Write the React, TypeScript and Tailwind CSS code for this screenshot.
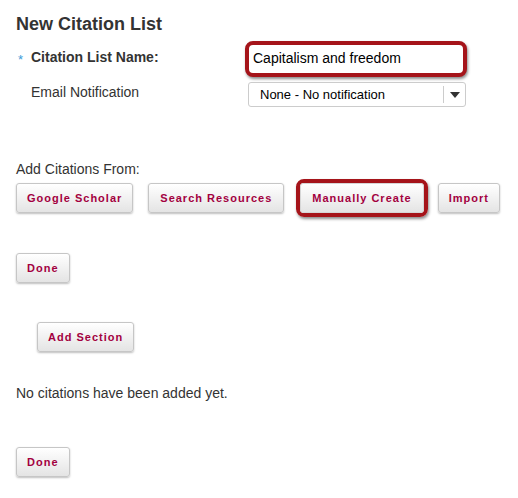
import React from 'react';

const btn =
  'h-[30px] px-[10px] rounded-[3px] border border-[#c6c6c6] bg-gradient-to-b from-white to-[#e4e4e4] shadow-[0_1px_2px_rgba(0,0,0,0.25)] text-[11px] font-bold tracking-[1px] text-[#a3003f] leading-none whitespace-nowrap';

function Btn({ label, wide }: { label: string; wide?: boolean }) {
  return <button className={btn + (wide ? ' px-[11px]' : '')}>{label}</button>;
}

export default function App() {
  return (
    <div className="min-h-[498px] bg-white pl-4 pt-[13px] font-['Liberation_Sans',Arial,sans-serif] text-[#333]">
      <h1 className="text-[18px] font-bold leading-[22px]">New Citation List</h1>

      <div className="mt-[6px] flex h-[36px]">
        <div className="flex w-[229px] items-start pt-[8px]">
          <span className="w-[15px] pl-[2px] pt-[3px] text-[13px] leading-[16px] text-[#3a9bd8]">*</span>
          <span className="text-[14px] font-bold leading-[16px]">Citation List Name:</span>
        </div>
        <div className="w-[222px] rounded-[8px] border-4 border-[#a5141a] bg-white shadow-[1px_2px_3px_rgba(0,0,0,0.45)]">
          <div className="pl-[4px] pt-[5px] text-[14px] leading-[16px] text-black">Capitalism and freedom</div>
        </div>
      </div>

      <div className="mt-[5px] flex h-[25px]">
        <div className="w-[232px] pl-[15px] pt-[2px] text-[14px] leading-[16px]">Email Notification</div>
        <div className="flex w-[218px] rounded-[3px] border border-[#cccccc] bg-white">
          <div className="flex-1 pl-[11px] pt-[4px] text-[13px] leading-[15px] text-black">None - No notification</div>
          <div className="my-[3px] w-px bg-[#cccccc]" />
          <div className="flex w-[21px] items-center justify-center">
            <svg width="10" height="6" viewBox="0 0 10 6">
              <path d="M0 0h10L5 6z" fill="#333" />
            </svg>
          </div>
        </div>
      </div>

      <div className="mt-[54px] text-[14px] leading-[16px]">Add Citations From:</div>
      <div className="mt-[2px] flex items-center">
        <Btn label="Google Scholar" />
        <div className="ml-[15px]">
          <Btn label="Search Resources" wide />
        </div>
        <div className="ml-[12px] rounded-[8px] border-4 border-[#a5141a] shadow-[1px_2px_3px_rgba(0,0,0,0.45)]">
          <button className={btn + ' px-[11px] shadow-none border-[#d6d6d6]'}>Manually Create</button>
        </div>
        <div className="ml-[10px]">
          <Btn label="Import" />
        </div>
      </div>

      <div className="mt-[36px]">
        <Btn label="Done" />
      </div>

      <div className="mt-[39px] pl-[21px]">
        <Btn label="Add Section" />
      </div>

      <div className="mt-[33px] text-[14px] leading-[16px]">No citations have been added yet.</div>

      <div className="mt-[46px]">
        <Btn label="Done" />
      </div>
    </div>
  );
}
